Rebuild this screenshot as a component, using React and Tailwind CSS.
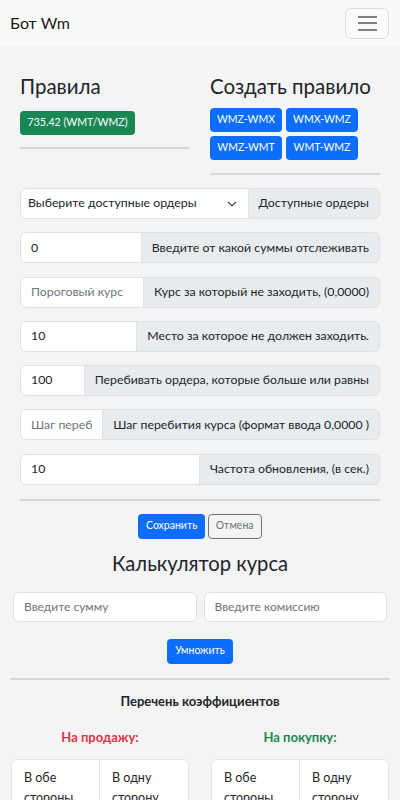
import { useState } from "react";

const font = { fontFamily: "'Lato', 'Liberation Sans', sans-serif" };

const fields = [
  { value: "0", label: "Введите от какой суммы отслеживать" },
  { placeholder: "Пороговый курс", label: "Курс за который не заходить, (0,0000)" },
  { value: "10", label: "Место за которое не должен заходить." },
  { value: "100", label: "Перебивать ордера, которые больше или равны" },
  { placeholder: "Шаг перебития курса", label: "Шаг перебития курса (формат ввода 0,0000 )" },
  { value: "10", label: "Частота обновления, (в сек.)" },
];

const pairs = ["WMZ-WMX", "WMX-WMZ", "WMZ-WMT", "WMT-WMZ"];

const Field = ({ item }) => {
  const [val, setVal] = useState(item.value || "");
  return (
    <div className="flex h-[31px] text-[12.3px] text-[#212529]">
      <input
        value={val}
        onChange={(e) => setVal(e.target.value)}
        placeholder={item.placeholder}
        className="flex-1 min-w-0 bg-white border border-[#dee2e6] rounded-l-[6px] px-[10px] outline-none placeholder:text-[#6c757d]"
      />
      <span className="flex items-center whitespace-nowrap bg-[#e9ecef] border border-l-0 border-[#dee2e6] rounded-r-[6px] px-[10px]">
        {item.label}
      </span>
    </div>
  );
};

const CoefCard = () => (
  <div className="bg-white border border-[#e3e4e5] rounded-[6px] flex text-[12.5px] text-[#212529] leading-[20px]">
    <div className="w-1/2 border-r border-[#e3e4e5] px-[12px] pt-[8px] pb-3">В обе стороны</div>
    <div className="w-1/2 px-[12px] pt-[8px] pb-3">В одну сторону</div>
  </div>
);

const App = () => {
  return (
    <div className="min-h-screen bg-[#f4f4f5]" style={font}>
      <nav className="h-[46px] bg-[#fafafa] flex items-center justify-between pl-[10px] pr-[11px]">
        <span className="text-[16px] text-[#1a1a1a]">Бот Wm</span>
        <button className="w-[44px] h-[31px] border border-[#dcdddd] rounded-[6px] flex flex-col items-center justify-center gap-[4.5px]">
          <span className="block w-[19px] h-[2px] bg-[#808080]"></span>
          <span className="block w-[19px] h-[2px] bg-[#808080]"></span>
          <span className="block w-[19px] h-[2px] bg-[#808080]"></span>
        </button>
      </nav>

      <div className="px-[20px] pt-[26px]">
        <div className="flex gap-[20px]">
          <div className="w-1/2">
            <h3 className="text-[20.5px] leading-[28px] text-[#212529] mb-[8px]">Правила</h3>
            <button className="h-[24px] px-[7.5px] rounded-[4px] bg-[#198754] text-white text-[10.6px]">735.42 (WMT/WMZ)</button>
            <div className="h-[2px] bg-[#d6d7d8] mt-[12px]"></div>
          </div>
          <div className="w-1/2">
            <h3 className="text-[20.5px] leading-[28px] text-[#212529] mb-[8px] whitespace-nowrap">Создать правило</h3>
            <div className="grid grid-cols-[72px_72px] gap-[4px]">
              {pairs.map((p) => (
                <button key={p} className="h-[24px] rounded-[4px] bg-[#0d6efd] text-white text-[10.5px]">{p}</button>
              ))}
            </div>
            <div className="h-[2px] bg-[#d6d7d8] mt-[13px]"></div>
          </div>
        </div>

        <div className="flex flex-col gap-[13.3px] mt-[13px]">
          <div className="flex h-[31px] text-[12.3px] text-[#212529]">
            <div className="flex-1 min-w-0 flex items-center justify-between bg-white border border-[#dee2e6] rounded-l-[6px] pl-[7px] pr-[10px]">
              <span className="whitespace-nowrap">Выберите доступные ордеры</span>
              <svg width="12" height="10" viewBox="0 0 16 16" fill="none" stroke="#343a40" strokeWidth="2" strokeLinecap="round" strokeLinejoin="round">
                <path d="m2 5 6 6 6-6" />
              </svg>
            </div>
            <span className="flex items-center whitespace-nowrap bg-[#e9ecef] border border-l-0 border-[#dee2e6] rounded-r-[6px] px-[10px]">
              Доступные ордеры
            </span>
          </div>
          {fields.map((f, i) => (
            <Field key={i} item={f} />
          ))}
        </div>

        <div className="h-[2px] bg-[#d6d7d8] mt-[14px]"></div>

        <div className="flex justify-center gap-[3px] mt-[13px]">
          <button className="h-[25px] px-[7.5px] rounded-[4px] bg-[#0d6efd] text-white text-[10.5px]">Сохранить</button>
          <button className="h-[25px] px-[7px] rounded-[4px] border border-[#6c757d] text-[#6c757d] text-[10.5px]">Отмена</button>
        </div>

        <h3 className="text-[20.2px] leading-[28px] text-[#212529] text-center mt-[10px]">Калькулятор курса</h3>
      </div>

      <div className="flex gap-[7px] px-[13px] mt-[15px]">
        <input placeholder="Введите сумму" className="flex-1 min-w-0 h-[30px] bg-white border border-[#dee2e6] rounded-[6px] px-[10px] text-[12px] outline-none placeholder:text-[#6c757d]" />
        <input placeholder="Введите комиссию" className="flex-1 min-w-0 h-[30px] bg-white border border-[#dee2e6] rounded-[6px] px-[10px] text-[12px] outline-none placeholder:text-[#6c757d]" />
      </div>

      <div className="flex justify-center mt-[17px]">
        <button className="h-[25px] px-[8px] rounded-[4px] bg-[#0d6efd] text-white text-[10.5px]">Умножить</button>
      </div>

      <div className="h-[2px] bg-[#d6d7d8] mx-[10px] mt-[14px]"></div>

      <p className="text-center font-bold text-[13px] leading-[18px] text-[#212529] mt-[12px]">Перечень коэффициентов</p>

      <div className="flex gap-[22px] px-[11px] mt-[18px]">
        <div className="w-1/2">
          <p className="text-center font-bold text-[13px] leading-[18px] text-[#dc3545]">На продажу:</p>
          <div className="mt-[13px]"><CoefCard /></div>
        </div>
        <div className="w-1/2">
          <p className="text-center font-bold text-[13px] leading-[18px] text-[#198754]">На покупку:</p>
          <div className="mt-[13px]"><CoefCard /></div>
        </div>
      </div>
    </div>
  );
};

export default App;
